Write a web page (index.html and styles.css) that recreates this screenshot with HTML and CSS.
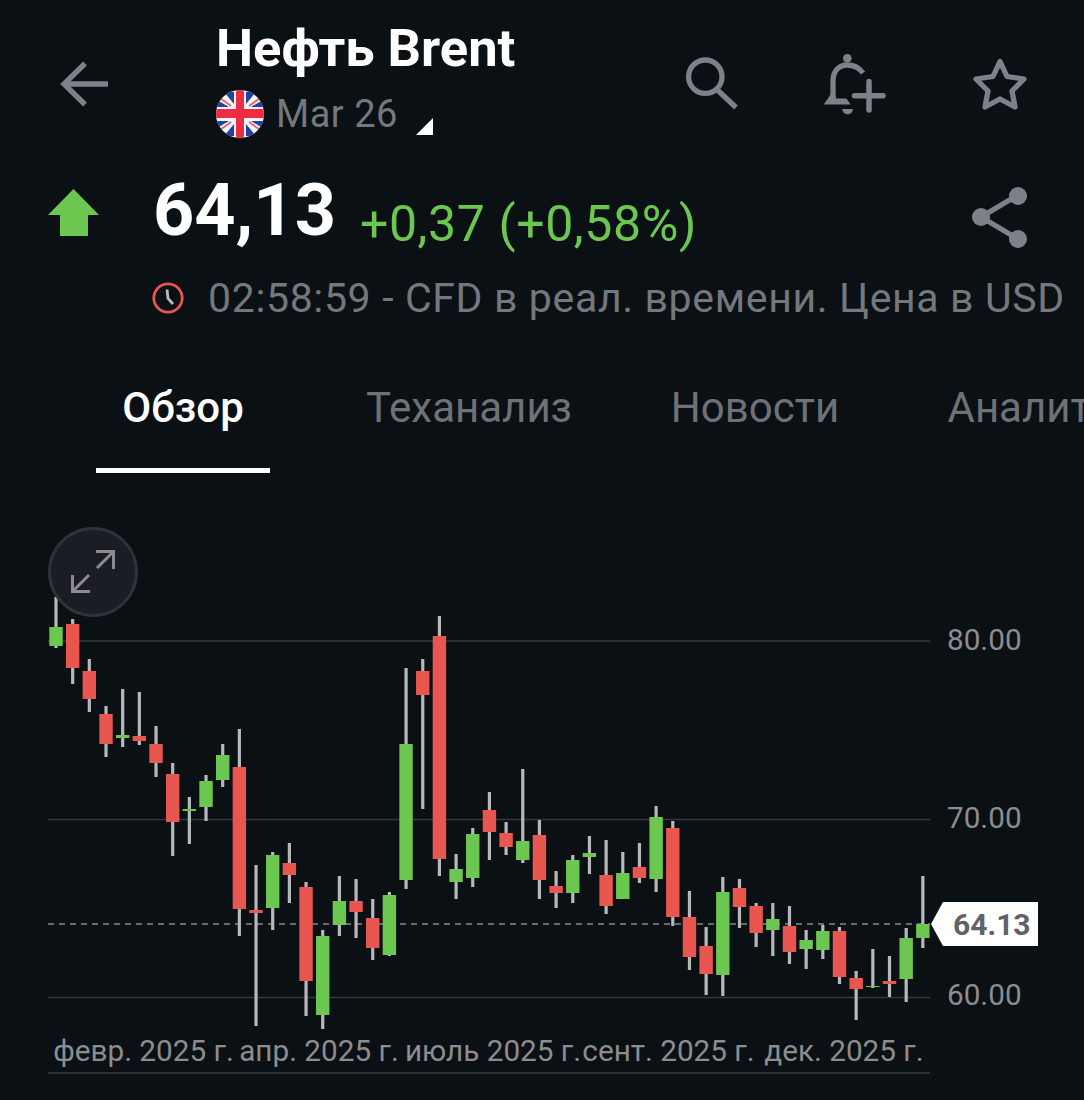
FILE: index.html
```html
<!DOCTYPE html>
<html lang="en">
  <head>
    <meta charset="UTF-8" />
    <meta name="viewport" content="width=device-width, initial-scale=1.0" />
    <title>Нефть Brent</title>
    <link rel="stylesheet" href="styles.css">
  </head>
  <body>
    <header class="top-bar">
      <svg class="icon back-icon" viewBox="0 0 48 46">
        <path d="M48 23H4M25 2.5 4 23l21 20.5" />
      </svg>
      <div class="title-block">
        <div class="title">Нефть Brent</div>
        <div class="contract">
          <svg class="flag" viewBox="0 0 48 48">
            <defs>
              <clipPath id="flag-clip"><circle cx="24" cy="24" r="24" /></clipPath>
            </defs>
            <g clip-path="url(#flag-clip)">
              <rect width="48" height="48" fill="#f4f4f6" />
              <path d="M8 2H18V14zM1 10 13 17H1zM40 2H30V14zM47 10 35 17H47zM8 46H18V34zM1 38 13 31H1zM40 46H30V34zM47 38 35 31H47z" fill="#2140a0" />
              <path d="M4 8 15 16M44 8 33 16M4 40 15 32M44 40 33 32" stroke="#e8657a" stroke-width="2" />
              <rect x="20" width="8" height="48" fill="#ee2d44" />
              <rect y="19" width="48" height="9" fill="#ee2d44" />
            </g>
          </svg>
          <span class="contract-name">Mar 26</span>
          <span class="contract-arrow"></span>
        </div>
      </div>
      <div class="actions">
        <svg class="icon search-icon" viewBox="0 0 54 54">
          <circle cx="20.3" cy="20.7" r="16.7" />
          <path d="M33 34.5 51 51.5" />
        </svg>
        <svg class="icon bell-icon" viewBox="0 0 64 64">
          <circle class="solid" cx="24.3" cy="6.3" r="4.3" />
          <path d="M40 21C36 15.5 31 13 24.3 13 15 13 10 20 10 29V48" />
          <path class="solid" d="M7.3 43 .7 52.5H27.5L23.5 46.5H12.7V43z" />
          <path class="solid" d="M19.3 57H30a5.3 5.3 0 0 1-10.7 0z" />
          <path class="plus" d="M46 29.5V58M31.5 43.7H60" />
        </svg>
        <svg class="icon star-icon" viewBox="0 0 54 52">
          <path d="M27 3.5 34 18.5 51 21 39 33 42 49 27 41 12 49 15 33 3 21 20 18.5z" />
        </svg>
      </div>
    </header>

    <section class="quote">
      <svg class="up-arrow" viewBox="0 0 51 47">
        <path d="M25.5 0 51 26H40V47H12V26H0z" />
      </svg>
      <span class="price">64,13</span>
      <span class="change">+0,37 (+0,58%)</span>
      <svg class="icon share-icon" viewBox="0 0 56 62">
        <path d="M9 30 46 8M9 30l37 22" />
        <circle class="solid" cx="46" cy="9" r="9" />
        <circle class="solid" cx="9" cy="30" r="9" />
        <circle class="solid" cx="46" cy="52" r="9" />
      </svg>
    </section>

    <section class="status">
      <svg class="clock" viewBox="0 0 32 32">
        <circle cx="16" cy="16" r="14.2" />
        <path d="M15 7.5 16 16.5 21 22" />
      </svg>
      <span>02:58:59 - CFD в реал. времени. Цена в USD</span>
    </section>

    <nav class="tabs">
      <div class="tab active"><span>Обзор</span></div>
      <div class="tab"><span>Теханализ</span></div>
      <div class="tab"><span>Новости</span></div>
      <div class="tab"><span>Аналитика</span></div>
    </nav>

    <section class="chart">
      <svg id="candles" viewBox="0 510 1084 590" width="1084" height="590"></svg>
      <div class="expand">
        <svg viewBox="0 0 44 44">
          <path d="M25 1.5h17.5V19M42.5 1.5 26 18M1.5 25v16.5H19M1.5 41.5 18 25" />
        </svg>
      </div>
      <div class="price-tag">64.13</div>
    </section>

    <script src="script.js"></script>
  </body>
</html>
```

FILE: styles.css
```css
* {
  box-sizing: border-box;
}

html,
body {
  margin: 0;
  height: 1100px;
  overflow: hidden;
}

body {
  background: #0b1015;
  color: #73787d;
  font-family: Roboto, "Noto Sans", sans-serif;
}

.icon {
  display: block;
  flex: none;
  fill: none;
  stroke: #7d8288;
  stroke-width: 5.3;
}

.icon .solid {
  fill: #7d8288;
  stroke: none;
}

.top-bar {
  display: flex;
  align-items: flex-start;
  height: 160px;
  padding: 17px 57px 0 60px;
}

.back-icon {
  width: 48px;
  height: 46px;
  margin-top: 44px;
  margin-right: 108px;
}

.title {
  color: #fff;
  font-size: 52.5px;
  font-weight: 700;
  line-height: 62px;
  white-space: nowrap;
}

.contract {
  display: flex;
  align-items: center;
  margin-top: 11px;
}

.flag {
  width: 48px;
  height: 48px;
}

.contract-name {
  margin-left: 12px;
  font-size: 38px;
  letter-spacing: 0.5px;
  line-height: 48px;
}

.contract-arrow {
  width: 0;
  height: 0;
  margin-left: 18px;
  margin-top: 24px;
  border-left: 17px solid transparent;
  border-bottom: 17px solid #fff;
}

.actions {
  display: flex;
  gap: 86px;
  margin-left: auto;
  margin-top: 35px;
}

.search-icon {
  width: 54px;
  height: 54px;
  margin-top: 4px;
  margin-right: -2px;
}

.bell-icon {
  width: 64px;
  height: 64px;
}

.bell-icon .plus {
  stroke-width: 5.5;
  stroke-linecap: round;
}

.star-icon {
  width: 54px;
  height: 52px;
  margin-top: 6px;
  stroke-linejoin: round;
}

.quote {
  display: flex;
  align-items: flex-start;
  height: 100px;
  padding: 0 56px 0 48px;
}

.up-arrow {
  width: 51px;
  height: 47px;
  margin-top: 29px;
  margin-right: 54px;
  fill: #6cc751;
}

.price {
  margin-top: 1px;
  color: #fff;
  font-size: 72px;
  font-weight: 700;
  line-height: 100px;
}

.change {
  margin-left: 24px;
  margin-top: 31px;
  color: #6cc751;
  font-size: 50px;
  letter-spacing: 0.6px;
  line-height: 66px;
  white-space: nowrap;
}

.share-icon {
  width: 56px;
  height: 62px;
  margin-left: auto;
  margin-top: 27px;
}

.status {
  display: flex;
  align-items: center;
  gap: 24px;
  height: 76px;
  padding-left: 152px;
  font-size: 41px;
  letter-spacing: 0.65px;
  white-space: nowrap;
}

.clock {
  flex: none;
  width: 32px;
  height: 32px;
  fill: none;
  stroke-width: 2.8;
}

.clock circle {
  stroke: #e8544e;
}

.clock path {
  stroke: #b9bcbf;
}

.tabs {
  display: grid;
  grid-auto-flow: column;
  grid-auto-columns: 286px;
  height: 174px;
  margin-left: 40px;
  padding-top: 42px;
}

.tab {
  text-align: center;
  color: #6d7277;
  font-size: 42px;
  line-height: 60px;
  white-space: nowrap;
}

.tab:last-child {
  padding-left: 26px;
}

.tab span {
  display: inline-block;
  height: 100%;
}

.tab.active {
  color: #fff;
  font-weight: 500;
}

.tab.active span {
  height: 95px;
  padding: 0 26px;
  border-bottom: 5px solid #fff;
}

.chart {
  position: relative;
  height: 590px;
}

#candles {
  display: block;
}

.grid-line {
  stroke: #34373b;
  stroke-width: 1.5;
}

.axis-line {
  stroke: #2c2f33;
  stroke-width: 2;
}

.last-line {
  stroke: #85888b;
  stroke-width: 1.5;
  stroke-dasharray: 6 5;
}

.wick {
  fill: #b7b8b9;
}

.up {
  fill: #6cc751;
}

.down {
  fill: #e9564f;
}

.axis-label {
  fill: #8b8d8f;
  font-size: 29.7px;
}

.expand {
  position: absolute;
  left: 48px;
  top: 17px;
  display: flex;
  align-items: center;
  justify-content: center;
  width: 90px;
  height: 90px;
  background: #1a1d24;
  border: 3px solid #2f3237;
  border-radius: 50%;
}

.expand svg {
  width: 44px;
  height: 44px;
  fill: none;
  stroke: #8a8c8e;
  stroke-width: 3;
}

.price-tag {
  position: absolute;
  left: 931px;
  top: 392px;
  width: 107px;
  height: 44px;
  padding-left: 22px;
  background: #fff;
  clip-path: polygon(0 50%, 12px 0, 100% 0, 100% 100%, 12px 100%);
  color: #5f6368;
  font-size: 30px;
  font-weight: 700;
  line-height: 46px;
}
```

FILE: script.js
```js
// [direction, wick top, body top, body bottom, wick bottom], y in page pixels
const candles = [
  ["up", 597, 627, 646, 648],
  ["down", 619, 624, 668, 684],
  ["down", 659, 671, 699, 712],
  ["down", 706, 714, 744, 757],
  ["up", 689, 735, 738, 747],
  ["down", 692, 736, 741, 745],
  ["down", 726, 744, 763, 777],
  ["down", 763, 774, 822, 856],
  ["up", 797, 809, 811, 844],
  ["up", 775, 781, 807, 821],
  ["up", 744, 755, 780, 787],
  ["down", 729, 767, 909, 936],
  ["down", 865, 910, 913, 1026],
  ["up", 852, 855, 908, 930],
  ["down", 843, 863, 875, 903],
  ["down", 882, 887, 981, 1016],
  ["up", 930, 936, 1015, 1029],
  ["up", 876, 901, 925, 936],
  ["down", 879, 901, 912, 938],
  ["down", 899, 918, 948, 960],
  ["up", 892, 895, 955, 956],
  ["up", 668, 744, 880, 889],
  ["down", 659, 671, 695, 809],
  ["down", 616, 636, 859, 876],
  ["up", 854, 869, 882, 899],
  ["up", 828, 834, 878, 887],
  ["down", 792, 810, 832, 860],
  ["down", 822, 833, 847, 855],
  ["up", 769, 841, 860, 863],
  ["down", 820, 835, 880, 899],
  ["down", 871, 886, 893, 908],
  ["up", 855, 860, 893, 903],
  ["up", 836, 853, 857, 874],
  ["down", 840, 875, 906, 914],
  ["up", 852, 873, 899, 899],
  ["down", 843, 867, 878, 883],
  ["up", 806, 817, 879, 892],
  ["down", 821, 828, 917, 926],
  ["down", 891, 917, 957, 970],
  ["down", 927, 946, 974, 995],
  ["up", 877, 892, 975, 996],
  ["down", 879, 888, 907, 928],
  ["down", 903, 906, 933, 947],
  ["up", 903, 919, 930, 956],
  ["down", 906, 926, 952, 964],
  ["up", 930, 940, 949, 969],
  ["up", 925, 931, 950, 959],
  ["down", 927, 931, 977, 984],
  ["down", 971, 978, 989, 1020],
  ["up", 949, 986, 987, 988],
  ["down", 956, 981, 984, 997],
  ["up", 928, 938, 979, 1002],
  ["up", 876, 924, 938, 948],
];

const svg = document.getElementById("candles");

function add(tag, attrs, text) {
  const el = document.createElementNS("http://www.w3.org/2000/svg", tag);
  for (const name in attrs) {
    el.setAttribute(name, attrs[name]);
  }
  if (text) {
    el.textContent = text;
  }
  svg.appendChild(el);
}

[641, 819.5, 997.5].forEach((y) => {
  add("line", { class: "grid-line", x1: 48, x2: 930, y1: y, y2: y });
});
add("line", { class: "axis-line", x1: 48, x2: 930, y1: 1073, y2: 1073 });
add("line", { class: "last-line", x1: 48, x2: 930, y1: 924, y2: 924 });

candles.forEach((c, i) => {
  const x = 56 + i * 16.67;
  add("rect", { class: "wick", x: x - 1.6, y: c[1], width: 3.2, height: c[4] - c[1] });
  add("rect", { class: c[0], x: x - 6.7, y: c[2], width: 13.4, height: c[3] - c[2] });
});

[
  ["80.00", 650],
  ["70.00", 828],
  ["60.00", 1005],
].forEach((label) => {
  add("text", { class: "axis-label", x: 947, y: label[1] }, label[0]);
});

[
  ["февр. 2025 г.", 143.5],
  ["апр. 2025 г.", 319],
  ["июль 2025 г.", 493],
  ["сент. 2025 г.", 668.5],
  ["дек. 2025 г.", 844],
].forEach((label) => {
  add("text", { class: "axis-label", x: label[1], y: 1061, "text-anchor": "middle" }, label[0]);
});
```
